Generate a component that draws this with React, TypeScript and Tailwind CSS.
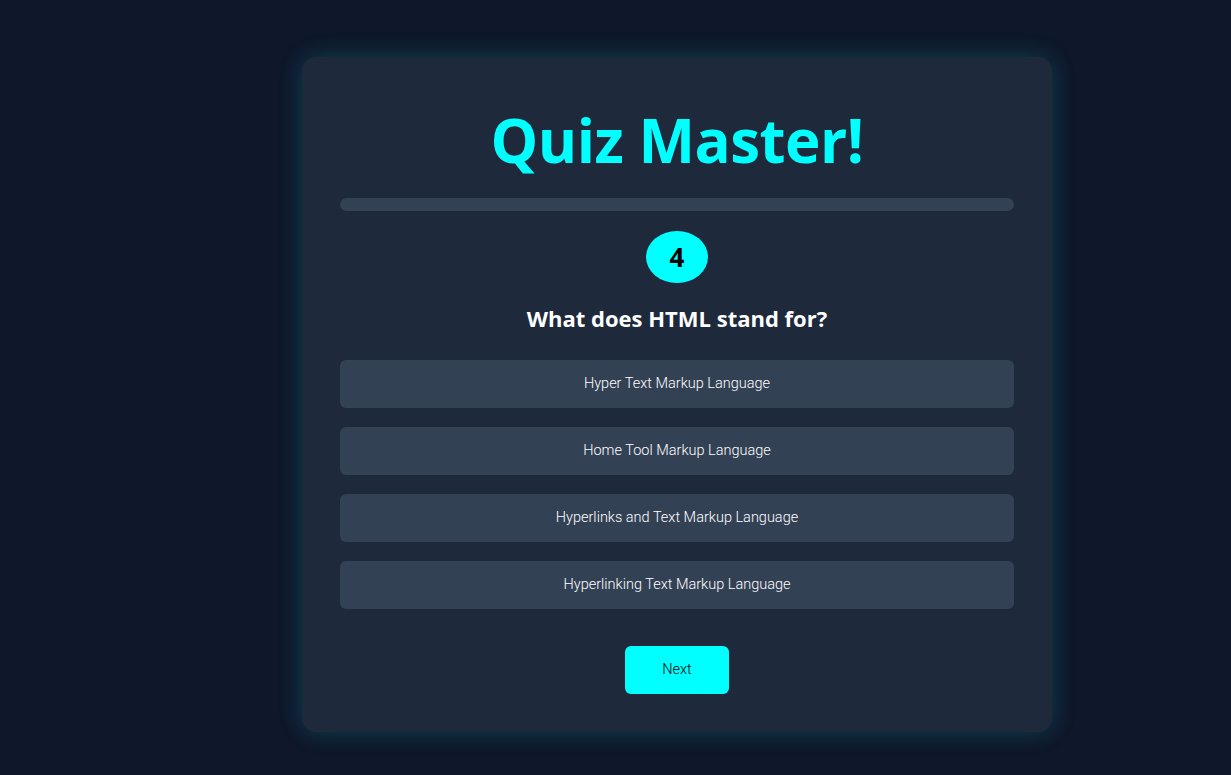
const options = [
  'Hyper Text Markup Language',
  'Home Tool Markup Language',
  'Hyperlinks and Text Markup Language',
  'Hyperlinking Text Markup Language',
]

export default function App() {
  return (
    <main className="min-h-screen bg-[#0f172a] pt-[57px]">
      <div className="ml-[302px] w-[750px] rounded-[14px] bg-[#1e293b] px-[38px] pt-[43px] pb-[38px] shadow-[0_0_24px_rgba(0,255,255,0.18)]">
        <h1 className="text-center text-[60px] font-bold leading-[80px] tracking-[-0.5px] text-[#00ffff] [font-family:'Open_Sans',sans-serif]">
          Quiz Master!
        </h1>

        {/* progress bar */}
        <div className="mt-[18px] h-[13px] w-full rounded-full bg-[#334155]" />

        <div className="mt-[20px] flex justify-center">
          <div className="flex h-[52px] w-[62px] items-center justify-center rounded-[50%] bg-[#00ffff] text-[26px] font-bold text-black [font-family:'Open_Sans',sans-serif]">
            4
          </div>
        </div>

        <h2 className="mt-[19px] text-center text-[22px] font-bold text-white [font-family:'Open_Sans',sans-serif]">
          What does HTML stand for?
        </h2>

        <div className="mt-[25px] flex flex-col gap-[19px]">
          {options.map((opt) => (
            <button
              key={opt}
              className="h-[48px] w-full rounded-[6px] bg-[#334155] text-[14.5px] font-light text-white [font-family:Roboto,sans-serif]"
            >
              {opt}
            </button>
          ))}
        </div>

        <div className="mt-[37px] flex justify-center">
          <button className="h-[48px] w-[104px] rounded-[6px] bg-[#00ffff] text-[14.5px] font-light text-black [font-family:Roboto,sans-serif]">
            Next
          </button>
        </div>
      </div>
    </main>
  )
}
